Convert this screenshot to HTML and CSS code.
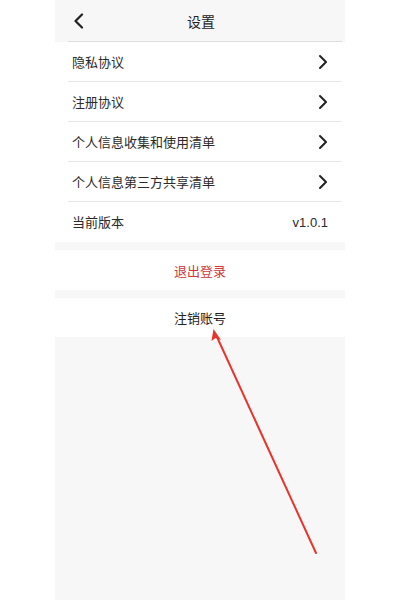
FILE: index.html
```html
<!DOCTYPE html>
<html lang="zh">
<head>
<meta charset="utf-8">
<link rel="stylesheet" href="styles.css">
</head>
<body>
<div class="phone">
  <header class="header">
    <span class="back"><svg width="12" height="16" viewBox="0 0 12 16"><path d="M9 1.5 L2.5 8 L9 14.5" fill="none" stroke="#222" stroke-width="2.2" stroke-linecap="round" stroke-linejoin="round"/></svg></span>
    <span class="title">设置</span>
  </header>
  <div class="group">
    <div class="row"><span class="label">隐私协议</span><svg class="chev" width="10" height="16" viewBox="0 0 10 16"><path d="M2 2 L8 8 L2 14" fill="none" stroke="#222" stroke-width="2" stroke-linecap="round" stroke-linejoin="round"/></svg></div>
    <div class="row"><span class="label">注册协议</span><svg class="chev" width="10" height="16" viewBox="0 0 10 16"><path d="M2 2 L8 8 L2 14" fill="none" stroke="#222" stroke-width="2" stroke-linecap="round" stroke-linejoin="round"/></svg></div>
    <div class="row"><span class="label">个人信息收集和使用清单</span><svg class="chev" width="10" height="16" viewBox="0 0 10 16"><path d="M2 2 L8 8 L2 14" fill="none" stroke="#222" stroke-width="2" stroke-linecap="round" stroke-linejoin="round"/></svg></div>
    <div class="row"><span class="label">个人信息第三方共享清单</span><svg class="chev" width="10" height="16" viewBox="0 0 10 16"><path d="M2 2 L8 8 L2 14" fill="none" stroke="#222" stroke-width="2" stroke-linecap="round" stroke-linejoin="round"/></svg></div>
    <div class="row last"><span class="label">当前版本</span><span class="ver">v1.0.1</span></div>
  </div>
  <div class="btn logout">退出登录</div>
  <div class="btn cancel">注销账号</div>
</div>
<svg class="arrow" width="400" height="600" viewBox="0 0 400 600">
  <line x1="316" y1="553" x2="217" y2="337" stroke="#e8352c" stroke-width="2" stroke-linecap="round"/>
  <path d="M213.5 329 L211.5 341 L215.5 338 L221 340 Z" fill="#e8352c"/>
</svg>
</body>
</html>
```
FILE: styles.css
```css
html, body {
  margin: 0;
  padding: 0;
  background: #ffffff;
  font-family: "Noto Sans CJK SC", "Noto Sans", sans-serif;
  color: #222;
}
.phone {
  width: 290px;
  height: 600px;
  margin-left: 55px;
  background: #f7f7f7;
}
.header {
  height: 42px;
  display: flex;
  align-items: center;
  justify-content: center;
  position: relative;
  border-bottom: 1px solid #dcdcdc;
  margin: 0 3px 0 13px;
  box-sizing: border-box;
}
.back {
  position: absolute;
  left: 5px;
  top: 13px;
  display: flex;
}
.title {
  font-size: 14px;
  color: #222;
  margin-right: 8px;
}
.group {
  background: #fff;
}
.row {
  height: 40px;
  margin: 0 3px 0 13px;
  padding: 0 14px 0 4px;
  display: flex;
  align-items: center;
  justify-content: space-between;
  border-bottom: 1px solid #e6e6e6;
  box-sizing: border-box;
  font-size: 13px;
  color: #2a2a2a;
}
.label {
  white-space: nowrap;
  line-height: 20px;
}
.row.last {
  border-bottom: none;
}
.ver {
  font-family: "Liberation Sans", Arial, sans-serif;
  font-size: 13px;
  color: #2a2a2a;
}
.btn {
  background: #fff;
  height: 40px;
  display: flex;
  align-items: center;
  justify-content: center;
  font-size: 13px;
}
.logout {
  margin-top: 8px;
  color: #d0363a;
}
.cancel {
  margin-top: 8px;
  height: 39px;
  color: #222;
}
.arrow {
  position: absolute;
  left: 0;
  top: 0;
  pointer-events: none;
}
```
